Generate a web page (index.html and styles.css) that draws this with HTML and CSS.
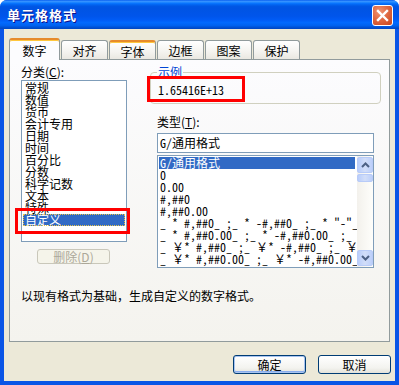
FILE: index.html
```html
<!DOCTYPE html>
<html lang="zh-CN">
<head>
  <meta charset="UTF-8" />
  <title>单元格格式</title>
  <link rel="stylesheet" href="styles.css">
</head>
<body>
  <div class="window">
    <div class="titlebar">
      <span class="title">单元格格式</span>
      <span class="close">
        <svg width="13" height="13" viewBox="0 0 13 13"><path d="M2 2 L11 11 M11 2 L2 11" stroke="#fff" stroke-width="2.4" stroke-linecap="square"/></svg>
      </span>
    </div>

    <div class="client">
      <div class="tabs">
        <div class="tab active">数字</div>
        <div class="tab">对齐</div>
        <div class="tab hot">字体</div>
        <div class="tab">边框</div>
        <div class="tab">图案</div>
        <div class="tab">保护</div>
      </div>

      <div class="panel">
        <div class="columns">
          <div class="col-left">
            <div class="label">分类(<u>C</u>):</div>
            <ul class="listbox cats">
              <li>常规</li>
              <li>数值</li>
              <li>货币</li>
              <li>会计专用</li>
              <li>日期</li>
              <li>时间</li>
              <li>百分比</li>
              <li>分数</li>
              <li>科学记数</li>
              <li>文本</li>
              <li>特殊</li>
              <li class="selected focus">自定义</li>
            </ul>
            <div class="btn disabled small">删除(<u>D</u>)</div>
          </div>

          <div class="col-right">
            <fieldset class="sample">
              <legend>示例</legend>
              <div class="sample-text mono">1.65416E+13</div>
            </fieldset>
            <div class="label type-label">类型(<u>T</u>):</div>
            <div class="input mono">G/通用格式</div>
            <div class="typelist">
              <ul class="mono">
                <li class="selected">G/通用格式</li>
                <li>0</li>
                <li>0.00</li>
                <li>#,##0</li>
                <li>#,##0.00</li>
                <li>_ * #,##0_ ;_ * -#,##0_ ;_ * "-"_ ;_ @_ </li>
                <li>_ * #,##0.00_ ;_ * -#,##0.00_ ;_ * "-"??_ ;_ @_ </li>
                <li>_ ￥* #,##0_ ;_ ￥* -#,##0_ ;_ ￥* "-"_ ;_ @_ </li>
                <li>_ ￥* #,##0.00_ ;_ ￥* -#,##0.00_ ;_ ￥* "-"??_ ;_ @_ </li>
              </ul>
              <div class="scrollbar">
                <div class="sb-btn">
                  <svg width="9" height="6" viewBox="0 0 9 6"><path d="M1 5 L4.5 1.5 L8 5" fill="none" stroke="#4d6185" stroke-width="2"/></svg>
                </div>
                <div class="sb-thumb"></div>
                <div class="sb-track"></div>
                <div class="sb-btn">
                  <svg width="9" height="6" viewBox="0 0 9 6"><path d="M1 1 L4.5 4.5 L8 1" fill="none" stroke="#4d6185" stroke-width="2"/></svg>
                </div>
              </div>
            </div>
          </div>
        </div>
        <p class="hint">以现有格式为基础，生成自定义的数字格式。</p>
      </div>

      <div class="actions">
        <div class="btn default">确定</div>
        <div class="btn">取消</div>
      </div>
    </div>

    <div class="mark mark-cat"></div>
    <div class="mark mark-sample"></div>
  </div>
</body>
</html>
```

FILE: styles.css
```css
* { box-sizing: border-box; margin: 0; padding: 0; }
body {
  font-family: "Noto Sans CJK SC", sans-serif;
  font-size: 12px;
  line-height: 12px;
  color: #000;
  background: #fff;
}
ul { list-style: none; }
u { text-decoration: underline; }

.window {
  position: relative;
  width: 399px;
  height: 385px;
  background: #0a55e6;
  padding: 0 4px 4px 4px;
  display: flex;
  flex-direction: column;
  border-radius: 7px 7px 0 0;
  overflow: hidden;
}

/* title bar */
.titlebar {
  height: 29px;
  margin: 0 -4px;
  padding: 0 6px 0 7px;
  display: flex;
  align-items: center;
  justify-content: space-between;
  background: linear-gradient(#0058ee 0%, #3a93ff 4%, #288eff 7%, #127dff 10%, #036ffc 13%, #0262ee 17%, #0057e5 22%, #0054e3 28%, #0055eb 56%, #005bf5 68%, #026afe 78%, #0062ef 88%, #0052d6 94%, #0046c0 100%);
}
.title {
  color: #fff;
  font-weight: bold;
  font-size: 13px;
  line-height: 14px;
  letter-spacing: 1px;
  text-shadow: 1px 1px #0f1089;
}
.close {
  width: 21px;
  height: 21px;
  border: 1px solid #fff;
  border-radius: 3px;
  background: radial-gradient(circle at 35% 30%, #f09574 0%, #e06a43 45%, #c7431c 100%);
  display: flex;
  align-items: center;
  justify-content: center;
  margin-top: 1px;
}

/* client area */
.client {
  flex: 1;
  background: #ece9d8;
  padding: 9px 5px 0 5px;
  display: flex;
  flex-direction: column;
}

.tabs {
  display: flex;
  align-items: flex-end;
  height: 21px;
  position: relative;
  z-index: 1;
}
.tab {
  width: 47px;
  height: 19px;
  margin-left: 1px;
  border: 1px solid #919b9c;
  border-bottom: none;
  border-radius: 3px 3px 0 0;
  background: linear-gradient(#fff, #f4f3ef 60%, #eae8e1);
  display: flex;
  align-items: center;
  justify-content: center;
  padding-top: 2px;
}
.tab.active {
  width: 51px;
  height: 22px;
  margin: 0 0 -1px 0;
  background: #fcfcfe;
  border-top: 2px solid #e68b2c;
  box-shadow: inset 0 1px #ffc73c;
  padding-top: 1px;
}
.tab.hot {
  border-top: 2px solid #e68b2c;
  box-shadow: inset 0 1px #ffc73c;
}

.panel {
  height: 283px;
  border: 1px solid #919b9c;
  background: linear-gradient(#fcfcfe, #f4f3ee);
  padding: 6px 8px 0 11px;
}

.columns { display: flex; }
.col-left { width: 106px; display: flex; flex-direction: column; }
.col-right { width: 231px; margin-left: 23px; }

.label { height: 12px; }
.col-left .label { margin-bottom: 2px; }

.listbox {
  border: 1px solid #7f9db9;
  background: #fff;
  padding: 1px;
}
.cats { height: 162px; }
.cats li { height: 12px; padding-left: 2px; white-space: nowrap; }
.selected { background: #316ac5; color: #fff; }
.focus { outline: 1px dotted #e7c34a; outline-offset: -1px; }

.btn {
  width: 73px;
  height: 19px;
  border: 1px solid #003c74;
  border-radius: 3px;
  background: linear-gradient(#fff, #f3f3ef 70%, #e3e2da);
  display: flex;
  align-items: center;
  justify-content: center;
}
.btn.small {
  height: 15px;
  margin: 7px 0 0 16px;
}
.btn.disabled {
  border-color: #c9c7ba;
  background: #f5f4ea;
  color: #aca899;
}
.btn.default {
  box-shadow: inset 0 0 0 1px #a8c4f0, inset 0 -1px 0 1px #89aded;
}

/* right column */
.sample {
  border: 1px solid #d0d0bf;
  border-radius: 4px;
  padding: 0 6px 7px 6px;
  height: 38px;
}
.sample legend {
  color: #0046d5;
  padding: 0 1px;
  margin-left: 0;
  line-height: 12px;
}
.sample-text { padding: 6px 0 0 1px; height: 12px; box-sizing: content-box; }

.mono {
  font-family: "Noto Sans Mono CJK SC", "Noto Sans CJK SC", monospace;
}

.type-label { margin: 12px 0 0 7px; }
.input {
  margin: 5px 0 0 7px;
  width: 217px;
  height: 20px;
  border: 1px solid #7f9db9;
  background: #fff;
  padding: 3px 0 0 2px;
}

.typelist {
  margin: 2px 0 0 7px;
  width: 217px;
  height: 113px;
  border: 1px solid #7f9db9;
  background: #fff;
  display: flex;
}
.typelist ul {
  flex: 1;
  padding: 1px 2px 0 1px;
  overflow: hidden;
}
.typelist li {
  height: 12px;
  white-space: pre;
  padding-left: 1px;
}

.scrollbar {
  width: 16px;
  display: flex;
  flex-direction: column;
  background: linear-gradient(90deg, #f3f1ec, #fefefb);
  padding: 1px 0;
}
.sb-btn, .sb-thumb {
  border: 1px solid #b8cbf8;
  border-radius: 2px;
  background: linear-gradient(90deg, #b9cdfb, #d2def9 50%, #bccffa);
}
.sb-btn {
  height: 16px;
  display: flex;
  align-items: center;
  justify-content: center;
}
.sb-thumb { height: 8px; margin-top: 1px; }
.sb-track { flex: 1; }

.hint { margin-top: 22px; }

.actions {
  display: flex;
  justify-content: flex-end;
  gap: 12px;
  margin: 13px -1px 0 0;
}

/* red annotation boxes drawn over the dialog */
.mark {
  position: absolute;
  border: 3px solid #f00;
}
.mark-cat { left: 15px; top: 208px; width: 115px; height: 26px; }
.mark-sample { left: 147px; top: 76px; width: 98px; height: 26px; }
```
